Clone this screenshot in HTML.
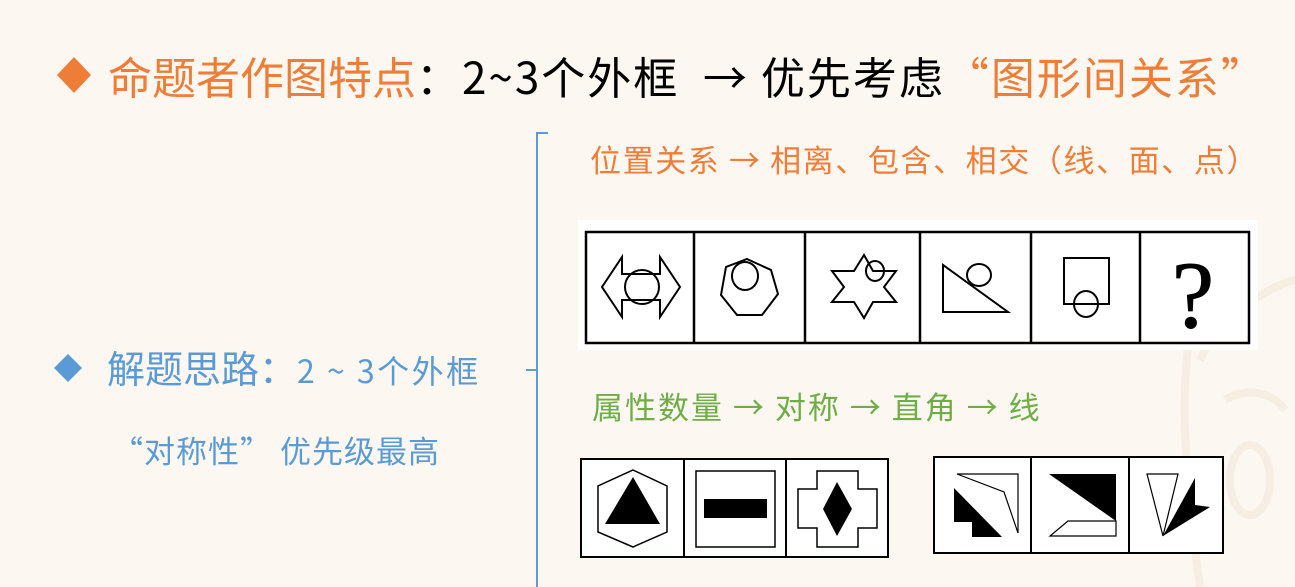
<!DOCTYPE html>
<html><head><meta charset="utf-8"><style>
html,body{margin:0;padding:0}
body{width:1295px;height:587px;background:#fcf7f1;position:relative;overflow:hidden;font-family:"Noto Sans CJK SC","Liberation Sans",sans-serif}
.t{position:absolute;white-space:nowrap;line-height:1}
</style></head><body>
<svg width="1295" height="587" style="position:absolute;left:0;top:0">
<g fill="none" stroke="#f6ede3" stroke-width="8">
<path d="M1200 360 C1230 300 1290 280 1295 280"/>
<path d="M1225 400 C1250 385 1275 395 1285 410"/>
<ellipse cx="1250" cy="480" rx="20" ry="35"/>
<path d="M1190 330 C1180 400 1185 480 1200 587"/>
</g>
<polygon points="74,57 91,75 74,93 57,75" fill="#ee7d37"/>
<polygon points="68,354 82,368 68,382 54,368" fill="#5b9bd5"/>
<path d="M548 133 H537 V587 M537 370 H526" fill="none" stroke="#5b9bd5" stroke-width="2"/>
<rect x="578" y="220" width="680" height="130" fill="#fff"/>
<g fill="none" stroke="#000" stroke-width="2.5">
<rect x="586" y="232" width="663" height="111"/>
<path d="M694 232V343M805 232V343M920 232V343M1031 232V343M1140 232V343"/>
</g>
<g fill="none" stroke="#000" stroke-width="2">
<path d="M622 274H660V257L680 287L660 317V300H622V317L602 287L622 257Z"/>
<ellipse cx="642" cy="287" rx="17" ry="17"/>
<polygon points="747,259 771,270 778,294 762,315 737,315 721,295 726,267"/>
<ellipse cx="745" cy="276" rx="13" ry="14"/>
<polygon points="864,255 873,271 896,271 884,287 896,302 873,302 864,318 854,302 832,302 844,287 832,271 854,271"/>
<ellipse cx="875" cy="271" rx="9" ry="10"/>
<polygon points="943,265 943,312 1008,312"/>
<ellipse cx="979" cy="275" rx="12" ry="11"/>
<rect x="1064" y="258" width="45" height="46"/>
<ellipse cx="1086" cy="304" rx="12" ry="13"/>
</g>
<text x="1193" y="327" font-family="Liberation Serif" font-size="95" text-anchor="middle" fill="#000" stroke="#000" stroke-width="1">?</text>
<rect x="581" y="459" width="307" height="98" fill="#fff" stroke="#000" stroke-width="2"/>
<path d="M684 459V557M786 459V557" stroke="#000" stroke-width="2"/>
<polygon points="633,470 667,486 667,532 633,547 598,532 598,486" fill="none" stroke="#000" stroke-width="1.5"/>
<polygon points="633,477 660,524 605,524" fill="#000"/>
<rect x="696" y="471" width="79" height="76" fill="none" stroke="#000" stroke-width="1.5"/>
<rect x="704" y="499" width="63" height="19" fill="#000"/>
<polygon points="817,471 858,471 858,489 877,489 877,528 858,528 858,547 817,547 817,528 798,528 798,489 817,489" fill="none" stroke="#000" stroke-width="1.5"/>
<polygon points="837,482 852,509 837,536 823,509" fill="#000"/>
<rect x="934" y="457" width="289" height="96" fill="#fff" stroke="#000" stroke-width="2"/>
<path d="M1031 457V553M1129 457V553" stroke="#000" stroke-width="2"/>
<polygon points="957,474 1018,474 1018,533 1004,492" fill="none" stroke="#000" stroke-width="1.2"/>
<polygon points="954,488 1002,537 972,537 972,522 954,522" fill="#000"/>
<polygon points="1049,474 1116,474 1116,521" fill="#000"/>
<polygon points="1068,521 1116,521 1116,536 1050,536" fill="none" stroke="#000" stroke-width="1.2"/>
<polygon points="1147,474 1178,474 1163,536" fill="none" stroke="#000" stroke-width="1.2"/>
<polygon points="1195,478 1195,505 1210,507 1163,536" fill="#000"/>
</svg>
<div class="t" style="left:108px;top:53px;font-size:44px;color:#ee7d37">命题者作图特点<span style="color:#000;letter-spacing:2px">：2~3个外框 &nbsp;→ 优先考虑</span><span style="letter-spacing:2px">“图形间关系”</span></div>
<div class="t" style="left:107px;top:348px;font-size:38px;color:#5b9bd5">解题思路：<span style="font-size:32px;letter-spacing:2.5px">2 ~ 3个外框</span></div>
<div class="t" style="left:112px;top:434px;font-size:31px;color:#5b9bd5;letter-spacing:1px">“对称性” 优先级最高</div>
<div class="t" style="left:590px;top:143px;font-size:31px;color:#ee7d37;letter-spacing:1.6px">位置关系 → 相离、包含、相交（线、面、点）</div>
<div class="t" style="left:592px;top:390px;font-size:31px;color:#70ad47;letter-spacing:2px">属性数量 → 对称 → 直角 → 线</div>
</body></html>
